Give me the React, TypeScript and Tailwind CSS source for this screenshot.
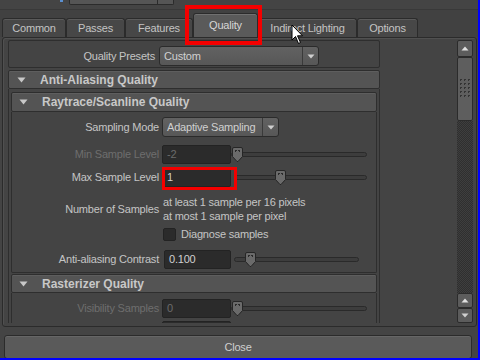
import React from "react";

const HeaderTri = () => (
  <svg width="9" height="6" viewBox="0 0 9 6" className="shrink-0">
    <path d="M0.5 0.5H8.5L4.5 5.5Z" fill="#c8c8c8" />
  </svg>
);

const SmallDown = () => (
  <svg width="8" height="5" viewBox="0 0 8 5">
    <path d="M0.5 0.5H7.5L4 4.5Z" fill="#cfcfcf" />
  </svg>
);

const SmallUp = () => (
  <svg width="8" height="5" viewBox="0 0 8 5">
    <path d="M0.5 4.5H7.5L4 0.5Z" fill="#e0e0e0" />
  </svg>
);

const Thumb = () => (
  <svg width="11" height="15" viewBox="0 0 11 15">
    <path
      d="M2 0.5H9Q10.5 0.5 10.5 2V9.5L6 14.5H5L0.5 9.5V2Q0.5 0.5 2 0.5Z"
      fill="#6a6a6a"
      stroke="#262626"
    />
    <rect x="3" y="3" width="1" height="2" fill="#2a2a2a" />
    <rect x="7" y="3" width="1" height="2" fill="#2a2a2a" />
    <rect x="3" y="3" width="2" height="1" fill="#2a2a2a" />
    <rect x="6" y="3" width="2" height="1" fill="#2a2a2a" />
  </svg>
);

function Slider({ thumb, width }: { thumb: number; width: number }) {
  return (
    <div className="relative h-[19px] flex items-center" style={{ width }}>
      <div className="w-full h-[5px] rounded-[3px] border border-[#2a2a2a] bg-[#3d3d3d]" />
      <div className="absolute top-[2px]" style={{ left: thumb }}>
        <Thumb />
      </div>
    </div>
  );
}

function Dropdown({ text, width }: { text: string; width: number }) {
  return (
    <div
      className="h-[20px] flex items-stretch rounded-[3px] border border-[#2b2b2b] bg-gradient-to-b from-[#626262] to-[#575757]"
      style={{ width }}
    >
      <div className="flex-1 flex items-center pl-[4px] text-[#d0d0d0]">{text}</div>
      <div className="w-[16px] border-l border-[#3a3a3a] flex items-center justify-center">
        <SmallDown />
      </div>
    </div>
  );
}

function Input({ text, disabled, w = 69 }: { text: string; disabled?: boolean; w?: number }) {
  return (
    <div
      className={
        "h-[19px] flex items-center pl-[4px] rounded-[2px] border border-[#232323] bg-[#2b2b2b] " +
        (disabled ? "text-[#6c6c6c]" : "text-[#d0d0d0]")
      }
      style={{ width: w }}
    >
      {text}
    </div>
  );
}

function Label({ text, disabled }: { text: string; disabled?: boolean }) {
  return (
    <div className={"w-[147px] text-right shrink-0 " + (disabled ? "text-[#6e6e6e]" : "text-[#c4c4c4]")}>
      {text}
    </div>
  );
}

function Header({ title, h, triMl }: { title: string; h: string; triMl: string }) {
  return (
    <div
      className={
        "shrink-0 flex items-center rounded-[2px] border border-[#2e2e2e] bg-[#545454] shadow-[inset_0_1px_0_#5e5e5e] tracking-normal " +
        h
      }
    >
      <div className={"flex items-center " + triMl}>
        <HeaderTri />
      </div>
      <div className="font-bold text-[12px] text-[#c8c8c8] ml-[14px]">{title}</div>
    </div>
  );
}

function Grip() {
  const rows = [0, 1, 2, 3, 4];
  const cols = [0, 1, 2];
  return (
    <div className="flex flex-col gap-[2px]">
      {rows.map((r) => (
        <div key={r} className="flex gap-[2px]">
          {cols.map((c) => (
            <div key={c} className="w-[2px] h-[2px] border-l border-t border-[#333]" />
          ))}
        </div>
      ))}
    </div>
  );
}

function ScrollBtn({ up, h }: { up: boolean; h: string }) {
  return (
    <div
      className={
        "w-[16px] shrink-0 rounded-[2px] border border-[#2b2b2b] bg-[#5c5c5c] flex items-center justify-center " + h
      }
    >
      {up ? <SmallUp /> : <SmallDown />}
    </div>
  );
}

const tabs = [
  { t: "Common", w: 64 },
  { t: "Passes", w: 59 },
  { t: "Features", w: 68 },
  { t: "Quality", w: 65, sel: true },
  { t: "Indirect Lighting", w: 99 },
  { t: "Options", w: 61 },
];

export default function App() {
  return (
    <div className="relative w-[480px] h-[360px] bg-[#444444] border-r-2 border-b-2 border-[#0000ff] flex flex-col overflow-hidden font-['Liberation_Sans',Arial,sans-serif] text-[11px] tracking-[-0.2px] text-[#c8c8c8] leading-none select-none">
      {/* top strip */}
      <div className="h-[9px] shrink-0 flex items-start">
        <div className="ml-[60px] w-[3px] h-[2px] bg-[#5b8fd0]" />
        <div className="ml-[6px] w-[105px] h-[5px] flex rounded-b-[2px] border-x border-b border-[#2b2b2b] bg-[#555]">
          <div className="w-[88px] border-r border-[#2b2b2b]" />
        </div>
      </div>

      {/* tab row */}
      <div className="h-[28px] shrink-0 flex items-end pl-[2px] border-t border-[#393939] bg-[#414141]">
        {tabs.map((tb) => (
          <div
            key={tb.t}
            className={
              "flex items-center justify-center rounded-t-[3px] border border-b-0 border-[#2b2b2b] " +
              (tb.sel
                ? "h-[24px] bg-[#5a5a5a] text-[#d6d6d6] shadow-[inset_0_1px_0_#707070]"
                : "h-[19px] bg-[#474747] text-[#c4c4c4] shadow-[inset_0_1px_0_#5a5a5a]")
            }
            style={{ width: tb.w }}
          >
            {tb.t}
          </div>
        ))}
      </div>

      {/* main panel */}
      <div className="ml-[2px] w-[475px] h-[290px] shrink-0 rounded-[3px] border border-[#2b2b2b] shadow-[inset_1px_1px_0_#505050] flex pt-[2px] pl-[5px] pr-[3px] pb-[3px]">
        {/* content column */}
        <div className="w-[372px] h-[283px] overflow-hidden flex flex-col shrink-0">
          {/* presets */}
          <div className="h-[28px] shrink-0 rounded-[2px] border border-[#2e2e2e] flex items-start pt-[5px]">
            <div className="w-[146px] h-[20px] flex items-center justify-end text-[#c4c4c4]">Quality Presets</div>
            <div className="ml-[4px]">
              <Dropdown text="Custom" width={160} />
            </div>
          </div>

          {/* Anti-aliasing header */}
          <div className="mt-[2px]">
            <Header title="Anti-Aliasing Quality" h="h-[19px]" triMl="ml-[8px]" />
          </div>

          {/* AA body */}
          <div className="flex-1 border-x border-[#2e2e2e] px-[2px] pt-[3px] flex flex-col">
            <Header title="Raytrace/Scanline Quality" h="h-[20px]" triMl="ml-[7px]" />

            {/* raytrace frame */}
            <div className="h-[161px] shrink-0 border-x border-b border-[#2e2e2e] rounded-b-[2px] pt-[5px] flex flex-col">
              <div className="flex items-center h-[20px]">
                <Label text="Sampling Mode" />
                <div className="ml-[3px]">
                  <Dropdown text="Adaptive Sampling" width={117} />
                </div>
              </div>

              <div className="flex items-center h-[19px] mt-[8px]">
                <Label text="Min Sample Level" disabled />
                <div className="ml-[3px]">
                  <Input text="-2" disabled />
                </div>
                <Slider thumb={1} width={136} />
              </div>

              <div className="flex items-center h-[19px] mt-[4px]">
                <Label text="Max Sample Level" />
                <div className="ml-[3px]">
                  <Input text="1" />
                </div>
                <div className="ml-[3px]">
                  <Slider thumb={41} width={133} />
                </div>
              </div>

              <div className="flex items-center h-[28px] mt-[8px]">
                <Label text="Number of Samples" />
                <div className="ml-[4px] flex flex-col gap-[3px] text-[#c4c4c4]">
                  <div>at least 1 sample per 16 pixels</div>
                  <div>at most 1 sample per pixel</div>
                </div>
              </div>

              <div className="flex items-center h-[13px] mt-[5px]">
                <div className="w-[147px] shrink-0" />
                <div className="ml-[4px] w-[13px] h-[13px] rounded-[2px] border border-[#232323] bg-[#2b2b2b]" />
                <div className="ml-[5px] text-[#c4c4c4]">Diagnose samples</div>
              </div>

              <div className="flex items-center h-[19px] mt-[9px]">
                <Label text="Anti-aliasing Contrast" />
                <div className="ml-[5px]">
                  <Input text="0.100" w={67} />
                </div>
                <div className="ml-[3px]">
                  <Slider thumb={11} width={125} />
                </div>
              </div>
            </div>

            {/* rasterizer */}
            <div className="mt-[1px]">
              <Header title="Rasterizer Quality" h="h-[19px]" triMl="ml-[7px]" />
            </div>
            <div className="flex-1 border-x border-[#2e2e2e] pt-[6px] flex flex-col">
              <div className="flex items-center h-[19px]">
                <Label text="Visibility Samples" disabled />
                <div className="ml-[3px]">
                  <Input text="0" disabled />
                </div>
                <Slider thumb={1} width={136} />
              </div>
              <div className="flex mt-[3px]">
                <div className="w-[147px] shrink-0" />
                <div className="ml-[3px] w-[69px] h-[19px] rounded-[2px] border border-[#232323] bg-[#2b2b2b]" />
              </div>
            </div>
          </div>
        </div>

        <div className="flex-1" />

        {/* scrollbar */}
        <div className="w-[16px] h-[283px] shrink-0 flex flex-col">
          <ScrollBtn up h="h-[17px]" />
          <div className="h-[64px] shrink-0 rounded-[2px] border border-[#2b2b2b] bg-[#5e5e5e] flex items-start justify-center pt-[21px]">
            <Grip />
          </div>
          <div className="flex-1 bg-[repeating-conic-gradient(#2f2f2f_0%_25%,#3e3e3e_0%_50%)] bg-[length:2px_2px]" />
          <ScrollBtn up h="h-[15px]" />
          <ScrollBtn up={false} h="h-[15px]" />
        </div>
      </div>

      {/* close button */}
      <div className="mt-[8px] ml-[4px] w-[468px] h-[24px] shrink-0 rounded-[3px] border border-[#2b2b2b] bg-[#5a5a5a] shadow-[inset_0_1px_0_#666] flex items-center justify-center text-[#cfcfcf]">
        Close
      </div>

      {/* red highlight boxes */}
      <div className="absolute left-[185px] top-[5px] w-[77px] h-[40px] border-[4px] border-[#f40000]" />
      <div className="absolute left-[162px] top-[167px] w-[75px] h-[23px] border-[3px] border-[#f40000]" />

      {/* mouse cursor */}
      <svg className="absolute left-[291px] top-[24px]" width="13" height="21" viewBox="0 0 13 21">
        <path
          d="M1 1V16L4.5 12.5L7.5 19.5L9.5 18.5L6.5 11.8H11.5Z"
          fill="#ffffff"
          stroke="#000000"
          strokeWidth="1"
          strokeLinejoin="round"
        />
      </svg>
    </div>
  );
}
